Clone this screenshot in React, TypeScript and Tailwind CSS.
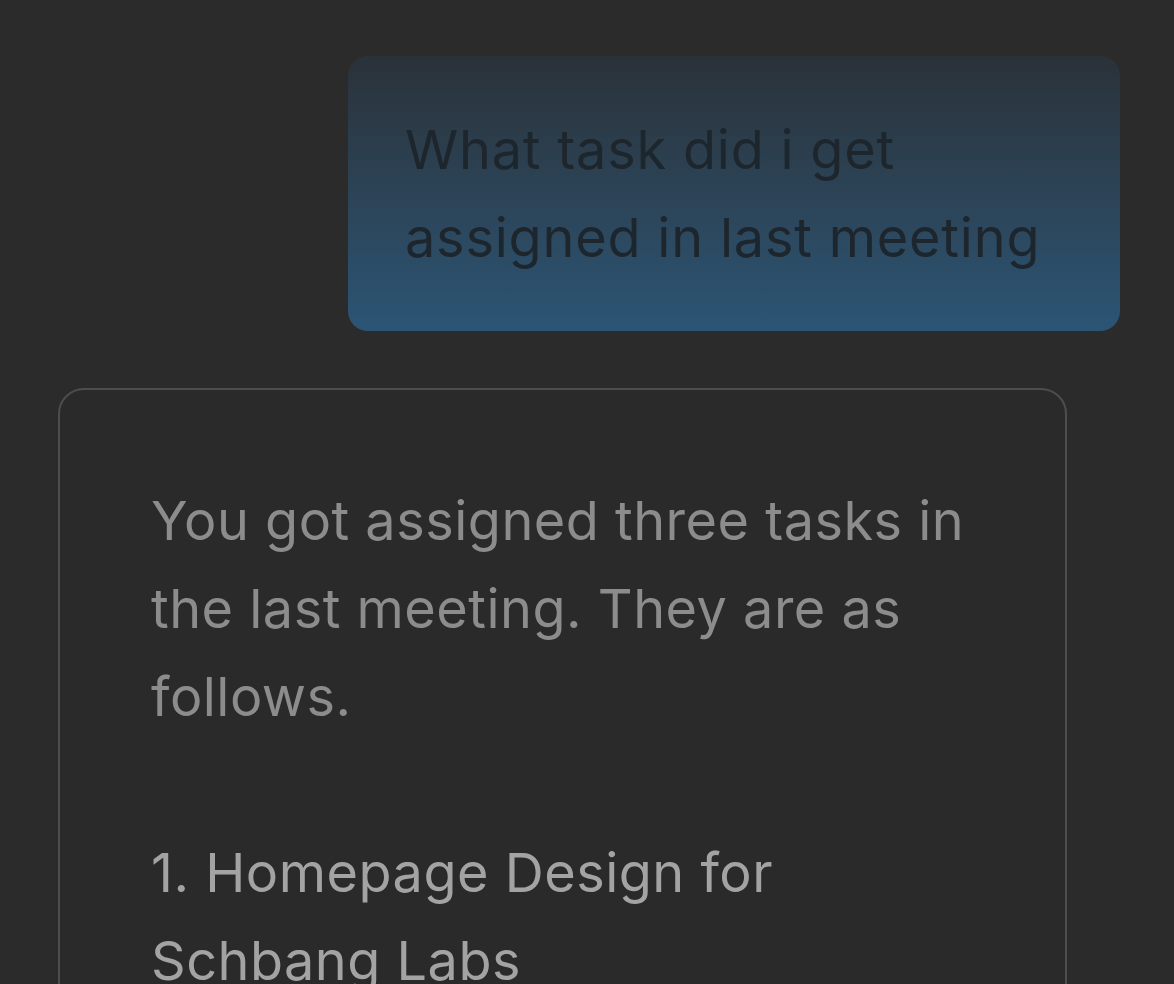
import React from "react";

export default function App() {
  return (
    <div className="w-[1174px] h-[984px] overflow-hidden bg-[#2b2b2b] font-['Inter',sans-serif]">
      <div className="flex flex-col pt-[56px]">
        <div className="flex justify-end pr-[54px]">
          <div className="w-[772px] h-[275px] rounded-[20px] bg-gradient-to-b from-[#2a3239] to-[#2b5575] pl-[57px] pt-[50px]">
            <p className="text-[54px] leading-[88px] text-[#1e262d] tracking-[0.8px] whitespace-nowrap">
              What task did i get
              <br />
              assigned in last meeting
            </p>
          </div>
        </div>
        <div className="mt-[57px] ml-[58px] w-[1009px] h-[700px] rounded-[26px] border-2 border-[#4d4d4d] bg-[#2a2a2a] pl-[91px] pt-[87px]">
          <p className="text-[54px] leading-[88px] text-[#8c8c8c] tracking-[0.5px] whitespace-nowrap">
            You got assigned three tasks in
            <br />
            the last meeting. They are as
            <br />
            follows.
          </p>
          <p className="mt-[88px] text-[54px] leading-[88px] text-[#a3a3a3] tracking-[0.5px] whitespace-nowrap">
            1. Homepage Design for
            <br />
            Schbang Labs
          </p>
        </div>
      </div>
    </div>
  );
}
